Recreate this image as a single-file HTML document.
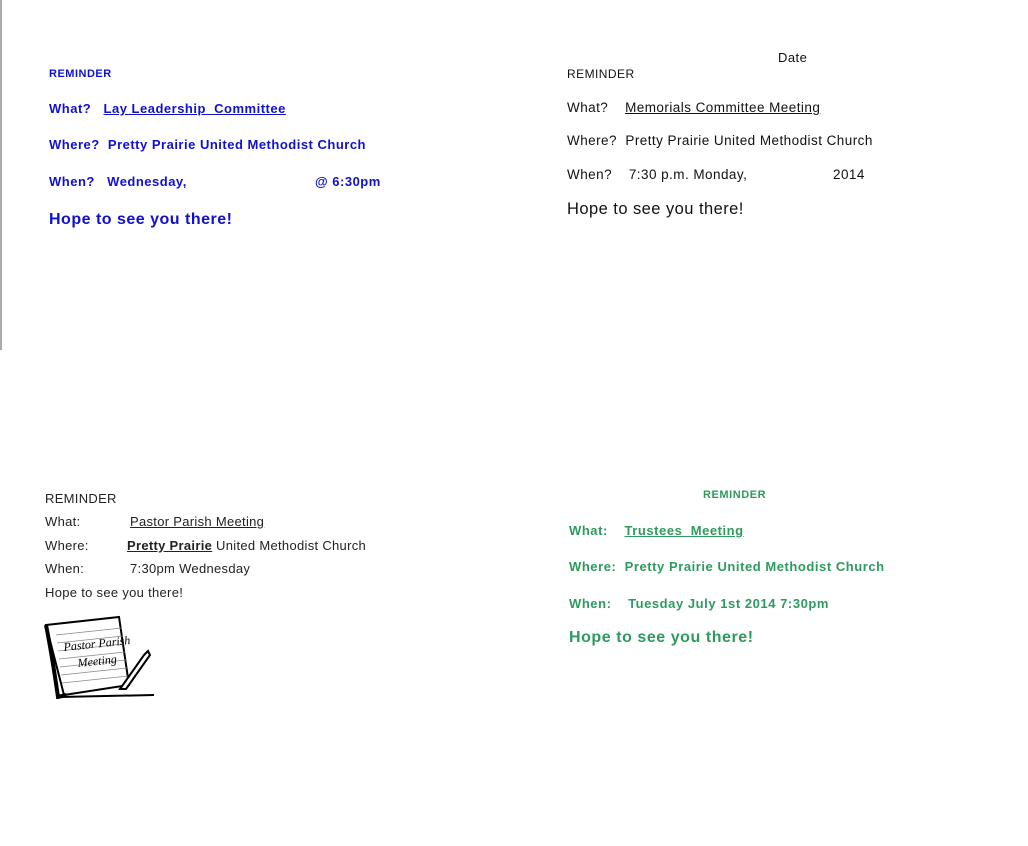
<!DOCTYPE html>
<html><head><meta charset="utf-8"><style>
body{margin:0;width:1028px;height:846px;background:#fff;position:relative;overflow:hidden;font-family:"Liberation Sans",sans-serif}
.t{position:absolute;white-space:pre;line-height:1}
.b{color:#1010d0;font-weight:bold;font-size:13px;letter-spacing:0.5px}
.k{color:#111;font-size:13.5px;letter-spacing:0.45px}
.g{color:#2e9a5e;font-weight:bold;font-size:13px;letter-spacing:0.55px}
.c{color:#222;font-size:13px;letter-spacing:0.3px}
u{text-decoration:underline}
</style></head><body>
<div style="position:absolute;left:0;top:0;width:2px;height:350px;background:#aaa"></div>

<div class="t b" style="left:49px;top:69px;font-size:11px">REMINDER</div>
<div class="t b" style="left:49px;top:102px">What?   <u>Lay Leadership  Committee</u></div>
<div class="t b" style="left:49px;top:138px">Where?  Pretty Prairie United Methodist Church</div>
<div class="t b" style="left:49px;top:175px">When?   Wednesday,</div>
<div class="t b" style="left:315px;top:175px">@ 6:30pm</div>
<div class="t b" style="left:49px;top:212px;font-size:16px">Hope to see you there!</div>

<div class="t k" style="left:778px;top:51px;font-size:13px">Date</div>
<div class="t k" style="left:567px;top:68px;font-size:12px">REMINDER</div>
<div class="t k" style="left:567px;top:101px">What?    <u>Memorials Committee Meeting</u></div>
<div class="t k" style="left:567px;top:134px">Where?  Pretty Prairie United Methodist Church</div>
<div class="t k" style="left:567px;top:168px">When?    7:30 p.m. Monday,</div>
<div class="t k" style="left:833px;top:168px">2014</div>
<div class="t k" style="left:567px;top:201px;font-size:16.5px">Hope to see you there!</div>

<div class="t c" style="left:45px;top:492px">REMINDER</div>
<div class="t c" style="left:45px;top:515px">What:</div>
<div class="t c" style="left:130px;top:515px"><u>Pastor Parish Meeting</u></div>
<div class="t c" style="left:45px;top:539px">Where:</div>
<div class="t c" style="left:127px;top:539px"><u><b>Pretty Prairie</b></u> United Methodist Church</div>
<div class="t c" style="left:45px;top:562px">When:</div>
<div class="t c" style="left:130px;top:562px">7:30pm Wednesday</div>
<div class="t c" style="left:45px;top:586px">Hope to see you there!</div>
<svg style="position:absolute;left:44px;top:615px" width="114" height="84" viewBox="0 0 114 84">
<path d="M2 10 L75 2 L85 70 L20 80 Z" fill="#fff" stroke="#000" stroke-width="2"/>
<path d="M2 10 Q8 40 14 82 L22 80" fill="none" stroke="#000" stroke-width="4"/>
<g stroke="#888" stroke-width="0.7">
<line x1="12" y1="20" x2="78" y2="13"/><line x1="13" y1="28" x2="79" y2="21"/><line x1="14" y1="36" x2="80" y2="29"/><line x1="15" y1="44" x2="81" y2="37"/><line x1="16" y1="52" x2="82" y2="45"/><line x1="17" y1="60" x2="83" y2="53"/><line x1="18" y1="68" x2="84" y2="61"/></g>
<text x="20" y="36" font-family="Liberation Serif" font-style="italic" font-size="12" transform="rotate(-6 20 36)">Pastor Parish</text>
<text x="34" y="52" font-family="Liberation Serif" font-style="italic" font-size="12" transform="rotate(-6 34 52)">Meeting</text>
<path d="M76 74 L100 40 L104 36 L106 40 L82 74 Z" fill="#fff" stroke="#000" stroke-width="2"/>
<path d="M16 82 L110 80" stroke="#000" stroke-width="2"/>
</svg>

<div class="t g" style="left:703px;top:490px;font-size:11px">REMINDER</div>
<div class="t g" style="left:569px;top:524px">What:    <u>Trustees  Meeting</u></div>
<div class="t g" style="left:569px;top:560px">Where:  Pretty Prairie United Methodist Church</div>
<div class="t g" style="left:569px;top:597px">When:    Tuesday July 1st 2014 7:30pm</div>
<div class="t g" style="left:569px;top:630px;font-size:16px">Hope to see you there!</div>
</body></html>
